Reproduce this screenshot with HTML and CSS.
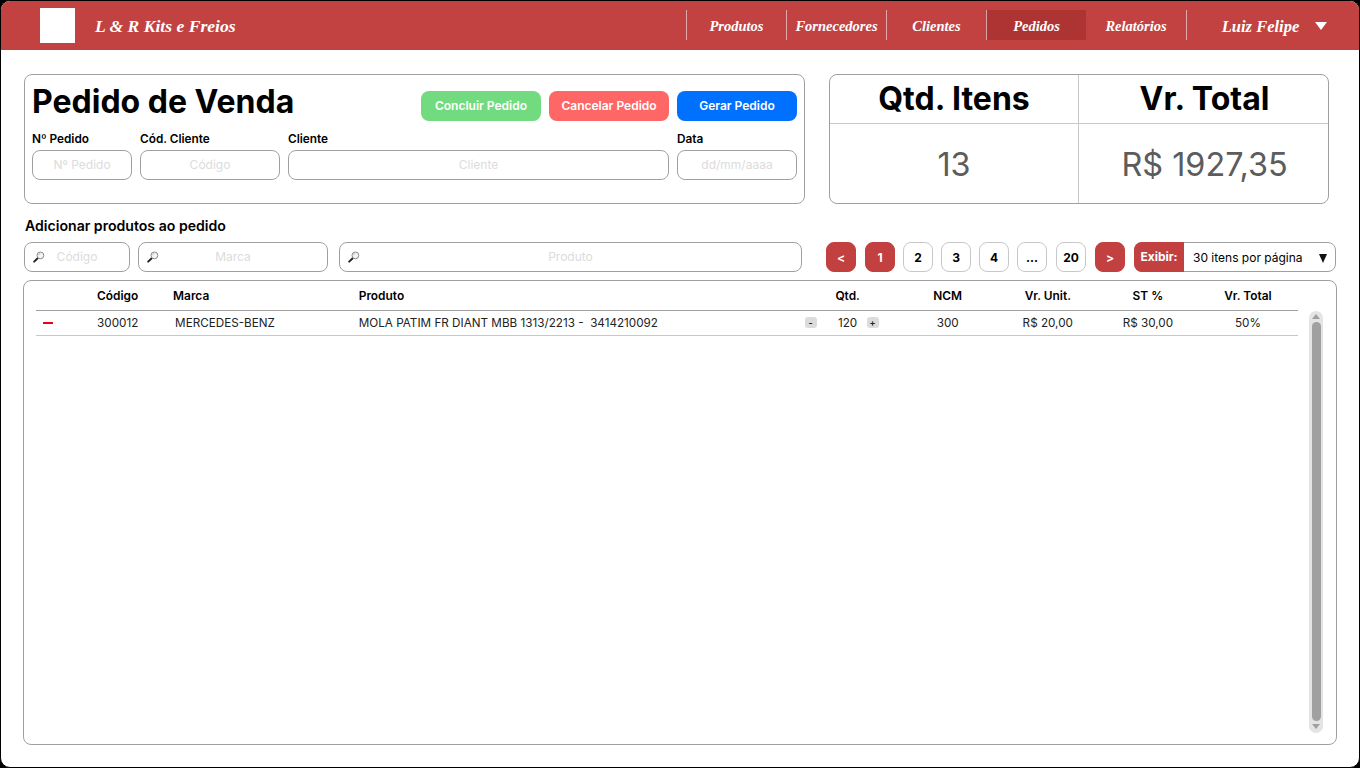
FILE: index.html
```html
<!DOCTYPE html>
<html lang="pt-BR">
<head>
    <meta charset="UTF-8">
    <meta name="viewport" content="width=device-width, initial-scale=1.0">
    <title>Pedido de Venda</title>
    <link rel="stylesheet" href="styles.css">
</head>
<body>
    <svg class="icon-defs" width="0" height="0">
        <symbol id="lupa" viewBox="0 0 12 12">
            <path d="M5.2 6.8 L1.2 10.6" stroke="#222" stroke-width="2" stroke-linecap="round"/>
            <circle cx="7.4" cy="4.4" r="3.4" fill="#f4f4f4" stroke="#8a8a8a" stroke-width="1"/>
            <path d="M5.6 4.2 A2 2 0 0 1 7.4 2.4" fill="none" stroke="#c4c4c4" stroke-width="1"/>
        </symbol>
    </svg>

    <div class="frame">
        <header class="topbar">
            <div class="logo"></div>
            <div class="brand">L &amp; R Kits e Freios</div>
            <nav class="menu">
                <a class="menu-item">Produtos</a>
                <a class="menu-item">Fornecedores</a>
                <a class="menu-item">Clientes</a>
                <a class="menu-item active">Pedidos</a>
                <a class="menu-item no-sep">Relatórios</a>
                <a class="menu-item user">Luiz Felipe <span class="user-arrow"></span></a>
            </nav>
        </header>

        <main class="content">
            <div class="top-row">
                <section class="order-panel">
                    <div class="order-head">
                        <h1>Pedido de Venda</h1>
                        <div class="order-actions">
                            <button class="btn btn-green">Concluir Pedido</button>
                            <button class="btn btn-red">Cancelar Pedido</button>
                            <button class="btn btn-blue">Gerar Pedido</button>
                        </div>
                    </div>
                    <div class="order-fields">
                        <label class="field w-100">Nº Pedido<input placeholder="Nº Pedido"></label>
                        <label class="field w-140">Cód. Cliente<input placeholder="Código"></label>
                        <label class="field grow">Cliente<input placeholder="Cliente"></label>
                        <label class="field w-120">Data<input placeholder="dd/mm/aaaa"></label>
                    </div>
                </section>

                <section class="stats">
                    <div class="stat-title stat-left">Qtd. Itens</div>
                    <div class="stat-title stat-right">Vr. Total</div>
                    <div class="stat-value stat-left">13</div>
                    <div class="stat-value stat-right">R$ 1927,35</div>
                </section>
            </div>

            <h2>Adicionar produtos ao pedido</h2>

            <div class="toolbar">
                <div class="search s-codigo">
                    <svg class="lupa"><use href="#lupa"/></svg>
                    <input placeholder="Código">
                </div>
                <div class="search s-marca">
                    <svg class="lupa"><use href="#lupa"/></svg>
                    <input placeholder="Marca">
                </div>
                <div class="search s-produto">
                    <svg class="lupa"><use href="#lupa"/></svg>
                    <input placeholder="Produto">
                </div>

                <div class="pages">
                    <button class="page on">&lt;</button>
                    <button class="page on wide">1</button>
                    <button class="page">2</button>
                    <button class="page">3</button>
                    <button class="page">4</button>
                    <button class="page">...</button>
                    <button class="page wide">20</button>
                    <button class="page on wide">&gt;</button>
                </div>

                <div class="per-page">
                    <span class="per-page-label">Exibir:</span>
                    <span class="per-page-value">30 itens por página</span>
                    <span class="per-page-arrow"></span>
                </div>
            </div>

            <section class="table-box">
                <table class="items">
                    <colgroup>
                        <col class="c-rm"><col class="c-cod"><col class="c-marca"><col class="c-prod">
                        <col class="c-num"><col class="c-num"><col class="c-num"><col class="c-num"><col class="c-num">
                    </colgroup>
                    <thead>
                        <tr>
                            <th></th>
                            <th>Código</th>
                            <th>Marca</th>
                            <th>Produto</th>
                            <th class="mid">Qtd.</th>
                            <th class="mid">NCM</th>
                            <th class="mid">Vr. Unit.</th>
                            <th class="mid">ST %</th>
                            <th class="mid">Vr. Total</th>
                        </tr>
                    </thead>
                    <tbody>
                        <tr>
                            <td><span class="remove"></span></td>
                            <td>300012</td>
                            <td class="marca">MERCEDES-BENZ</td>
                            <td class="produto">MOLA PATIM FR DIANT MBB 1313/2213 -&nbsp; 3414210092</td>
                            <td class="mid">
                                <div class="qty">
                                    <span class="qty-btn">-</span>
                                    <span class="qty-num">120</span>
                                    <span class="qty-btn plus">+</span>
                                </div>
                            </td>
                            <td class="mid">300</td>
                            <td class="mid">R$ 20,00</td>
                            <td class="mid">R$ 30,00</td>
                            <td class="mid">50%</td>
                        </tr>
                    </tbody>
                </table>

                <div class="scrollbar">
                    <span class="arrow-up"></span>
                    <div class="thumb"></div>
                    <span class="arrow-down"></span>
                </div>
            </section>
        </main>
    </div>
</body>
</html>
```

FILE: styles.css
```css
* {
    box-sizing: border-box;
}

html,
body {
    margin: 0;
    padding: 0;
    height: 100%;
    background-color: #000;
}

body {
    font-family: Inter, "Liberation Sans", sans-serif;
    color: #000;
    overflow: hidden;
}

.icon-defs {
    display: none;
}

.frame {
    width: 1360px;
    height: 768px;
    background-color: #fff;
    border: 1px solid #000;
    border-radius: 10px;
    overflow: hidden;
    display: flex;
    flex-direction: column;
}

/* topo */
.topbar {
    height: 49px;
    flex: none;
    background-color: #c24242;
    color: #fff;
    display: flex;
    align-items: flex-start;
    padding-left: 39px;
    font-family: "Liberation Serif", cursive;
    font-style: italic;
    font-weight: 700;
}

.logo {
    width: 35px;
    height: 35px;
    margin-top: 7px;
    background-color: #fff;
}

.brand {
    margin-left: 20px;
    margin-top: 14px;
    font-size: 17.6px;
    line-height: 22px;
}

.menu {
    margin-left: auto;
    margin-top: 9px;
    display: flex;
}

.menu-item {
    width: 100px;
    height: 30px;
    padding-top: 3px;
    border-left: 1px solid rgba(255, 255, 255, 0.55);
    display: flex;
    align-items: center;
    justify-content: center;
    font-size: 14.5px;
}

.menu-item.active {
    background-color: #ae3333;
}

.menu-item.no-sep {
    border-left: none;
}

.menu-item.user {
    width: 173px;
    font-size: 16.5px;
    padding-right: 25px;
    position: relative;
}

.user-arrow {
    position: absolute;
    left: 128px;
    top: 12px;
    border-left: 6.5px solid transparent;
    border-right: 6.5px solid transparent;
    border-top: 8px solid #fff;
}

/* conteudo */
.content {
    flex: 1;
    display: flex;
    flex-direction: column;
    padding: 24px 23px 22px 23px;
}

.top-row {
    display: flex;
    gap: 24px;
    height: 130px;
}

.order-panel {
    width: 781px;
    border: 1px solid #a0a0a0;
    border-radius: 8px;
    padding: 0 7px;
}

.order-head {
    display: flex;
    justify-content: space-between;
    height: 54px;
}

h1 {
    margin: 0;
    font-size: 32px;
    font-weight: 700;
    line-height: 54px;
}

.order-actions {
    display: flex;
    gap: 8px;
    padding-top: 16px;
}

.btn {
    width: 120px;
    height: 30px;
    padding: 0 0 2px 0;
    border: none;
    border-radius: 8px;
    color: #fff;
    font-family: inherit;
    font-size: 12px;
    font-weight: 600;
}

.btn-green {
    background-color: #72db80;
}

.btn-red {
    background-color: #ff6666;
}

.btn-blue {
    background-color: #0070ff;
}

.order-fields {
    display: flex;
    gap: 8px;
    margin-top: 4px;
}

.field {
    display: flex;
    flex-direction: column;
    gap: 4px;
    font-size: 11.8px;
    font-weight: 600;
    line-height: 13px;
}

.field input,
.search {
    height: 30px;
    border: 1px solid #a0a0a0;
    border-radius: 8px;
    background-color: #fff;
}

input {
    width: 100%;
    font-family: inherit;
    font-size: 12px;
    font-weight: 400;
    text-align: center;
    outline: none;
    padding: 0 0 1px 0;
}

input::placeholder {
    color: #dcdcdc;
    opacity: 1;
}

.w-100 {
    width: 100px;
}

.w-140 {
    width: 140px;
}

.w-120 {
    width: 120px;
}

.grow {
    flex: 1;
}

/* quadro de totais */
.stats {
    width: 500px;
    border: 1px solid #a0a0a0;
    border-radius: 8px;
    display: grid;
    grid-template-columns: 249px 249px;
    grid-template-rows: 49px 79px;
    text-align: center;
}

.stat-title {
    font-size: 32px;
    font-weight: 700;
    line-height: 47px;
    border-bottom: 1px solid #c8c8c8;
}

.stat-value {
    font-size: 32.4px;
    font-weight: 400;
    line-height: 81px;
    color: #5c5c5c;
}

.stat-left {
    border-right: 1px solid #c8c8c8;
}

.stat-right {
    padding-left: 2px;
}

h2 {
    margin: 14px 0 0 1px;
    font-size: 14.1px;
    font-weight: 600;
    line-height: 16px;
}

/* filtros e paginacao */
.toolbar {
    display: flex;
    margin-top: 8px;
    height: 30px;
}

.search {
    display: flex;
    align-items: center;
    position: relative;
}

.search input {
    border: none;
    background: none;
    height: 26px;
    border-radius: 8px;
}

.lupa {
    position: absolute;
    left: 8px;
    top: 8px;
    width: 12px;
    height: 12px;
}

.s-codigo {
    width: 106px;
    margin-right: 8px;
}

.s-marca {
    width: 190px;
    margin-right: 11px;
}

.s-produto {
    width: 463px;
}

.pages {
    display: flex;
    gap: 8px;
    margin-left: 24px;
}

.page {
    width: 30px;
    height: 30px;
    padding: 0;
    border: 1px solid #c8c8c8;
    border-radius: 8px;
    background-color: #fff;
    font-family: inherit;
    font-size: 12px;
    font-weight: 700;
    color: #000;
}

.page.wide {
    margin-left: 1px;
}

.page.on {
    border-color: #c24040;
    background-color: #c24040;
    color: #fff;
}

.per-page {
    width: 202px;
    margin-left: 9px;
    border: 1px solid #a0a0a0;
    border-radius: 8px;
    display: flex;
    align-items: center;
    position: relative;
    font-size: 12px;
}

.per-page-label {
    width: 50px;
    height: 30px;
    margin: -1px 0 -1px -1px;
    border-radius: 8px 0 0 8px;
    background-color: #c24040;
    color: #fff;
    font-weight: 700;
    line-height: 30px;
    text-align: center;
}

.per-page-value {
    margin-left: 9px;
}

.per-page-arrow {
    position: absolute;
    right: 8px;
    top: 11px;
    border-left: 4.5px solid transparent;
    border-right: 4.5px solid transparent;
    border-top: 9px solid #111;
}

/* tabela */
.table-box {
    flex: 1;
    margin-top: 8px;
    margin-left: -1px;
    margin-right: -1px;
    border: 1px solid #a0a0a0;
    border-radius: 8px;
    padding-left: 12px;
    display: flex;
    align-items: flex-start;
}

.items {
    width: 1262px;
    table-layout: fixed;
    border-collapse: collapse;
    font-size: 11.7px;
}

.c-rm {
    width: 61px;
}

.c-cod {
    width: 76px;
}

.c-marca {
    width: 185.5px;
}

.c-prod {
    width: 438.5px;
}

.c-num {
    width: 100px;
}

th {
    height: 29px;
    padding: 0;
    text-align: left;
    font-size: 11.9px;
    font-weight: 600;
    border-bottom: 1px solid #a0a0a0;
}

td {
    height: 25px;
    padding: 0;
    border-bottom: 1px solid #c8c8c8;
    color: #222;
}

.mid {
    text-align: center;
}

th.mid {
    text-align: center;
}

.marca {
    padding-left: 2px;
}

.remove {
    display: block;
    width: 10px;
    height: 2px;
    margin-left: 7px;
    background-color: #e8001c;
}

.qty {
    display: flex;
    align-items: center;
    padding-left: 7px;
}

.qty-btn {
    width: 12px;
    height: 11px;
    border-radius: 3px;
    background-color: #dcdcdc;
    font-size: 9px;
    line-height: 11px;
    text-align: center;
    font-weight: 600;
}

.qty-btn.plus {
    margin-top: -1px;
}

.qty-num {
    width: 50px;
    padding-left: 12px;
}

/* barra de rolagem */
.scrollbar {
    width: 14px;
    height: 422px;
    margin-top: 30px;
    margin-left: 11px;
    border-radius: 7px;
    background-color: #e4e4e4;
    display: flex;
    flex-direction: column;
    align-items: center;
}

.arrow-up {
    margin-top: 3px;
    border-left: 4px solid transparent;
    border-right: 4px solid transparent;
    border-bottom: 5px solid #a0a0a0;
}

.thumb {
    width: 9px;
    height: 399px;
    margin-top: 3px;
    border-radius: 4.5px;
    background-color: #a0a0a0;
}

.arrow-down {
    margin-top: 3px;
    border-left: 4px solid transparent;
    border-right: 4px solid transparent;
    border-top: 5px solid #a0a0a0;
}
```
